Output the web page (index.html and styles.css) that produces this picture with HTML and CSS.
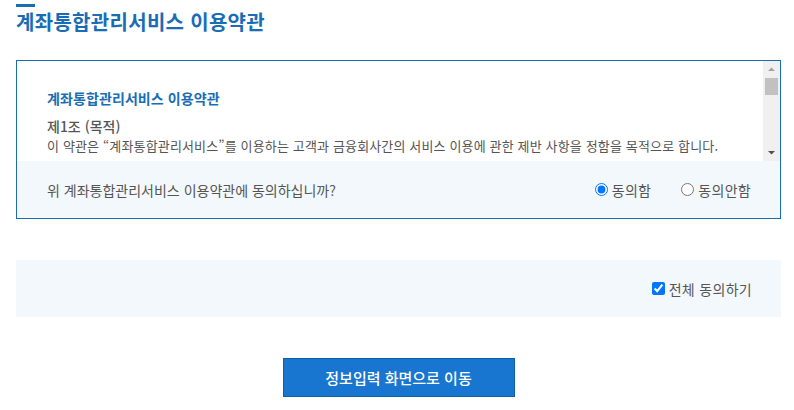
FILE: index.html
```html
<!DOCTYPE html>
<html lang="ko">
<head>
    <meta charset="UTF-8">
    <title>계좌통합관리서비스 이용약관</title>
    <link rel="stylesheet" href="styles.css">
</head>
<body>
    <div class="page">
        <!-- 페이지 제목 -->
        <h2 class="page-title">계좌통합관리서비스 이용약관</h2>

        <!-- 약관 박스 -->
        <div class="terms-box">
            <div class="terms-scroll">
                <div class="terms-text">
                    <h3 class="terms-title">계좌통합관리서비스 이용약관</h3>
                    <p class="terms-article">제1조 (목적)</p>
                    <p class="terms-body">이 약관은 “계좌통합관리서비스”를 이용하는 고객과 금융회사간의 서비스 이용에 관한 제반 사항을 정함을 목적으로 합니다.</p>
                </div>
                <!-- 스크롤바 -->
                <div class="scrollbar">
                    <svg class="arrow up" width="17" height="17" viewBox="0 0 17 17"><path d="M5 10 L12 10 L8.5 6.5 Z" fill="#a3a3a3"/></svg>
                    <div class="thumb"></div>
                    <div class="track"></div>
                    <svg class="arrow" width="17" height="17" viewBox="0 0 17 17"><path d="M5 7 L12 7 L8.5 10.5 Z" fill="#505050"/></svg>
                </div>
            </div>
            <div class="agree-row">
                <span class="question">위 계좌통합관리서비스 이용약관에 동의하십니까?</span>
                <div class="choices">
                    <label class="choice"><input type="radio" name="agree1" checked>동의함</label>
                    <label class="choice"><input type="radio" name="agree1">동의안함</label>
                </div>
            </div>
        </div>

        <!-- 전체 동의 -->
        <div class="all-agree">
            <label class="choice"><input type="checkbox" checked>전체 동의하기</label>
        </div>

        <div class="btn-area">
            <button class="btn-next" type="button">정보입력 화면으로 이동</button>
        </div>
    </div>
</body>
</html>
```
FILE: styles.css
```css
*{
    margin: 0;
    padding: 0;
    box-sizing: border-box;
}
body{
    font-family: "Noto Sans CJK KR", "Noto Sans", sans-serif;
    color: #555;
    background: #fff;
}
.page{
    padding: 4px 13px 0 16px;
}
/* 제목 */
.page-title{
    font-size: 20px;
    font-weight: 700;
    color: #1a6db5;
    line-height: 30px;
    letter-spacing: 0.3px;
}
.page-title::before{
    content: "";
    display: block;
    width: 19px;
    height: 3px;
    background: #1a6db5;
}
/* 약관 박스 */
.terms-box{
    margin-top: 23px;
    border: 1px solid #1a6db5;
}
.terms-scroll{
    display: flex;
    height: 100px;
    overflow: hidden;
}
.terms-text{
    flex: 1;
    padding: 28px 30px 0;
    font-size: 13px;
    line-height: 18px;
}
.terms-title{
    font-size: 14px;
    font-weight: 700;
    color: #1a6db5;
    margin-bottom: 9px;
    letter-spacing: 0.1px;
}
.terms-article{
    font-size: 14px;
    line-height: 21px;
    font-weight: 500;
    color: #555;
}
.terms-body{
    color: #555;
    letter-spacing: 0.15px;
}
.scrollbar{
    width: 17px;
    background: #f0f0f0;
    display: flex;
    flex-direction: column;
}
.scrollbar .arrow{
    display: block;
}
.thumb{
    height: 17px;
    margin: 0 2px;
    background: #c1c1c1;
}
.track{
    flex: 1;
}
.agree-row{
    display: flex;
    align-items: center;
    justify-content: space-between;
    height: 57px;
    background: #f2f8fb;
    padding: 0 29px 0 30px;
    font-size: 14px;
}
.choices{
    display: flex;
    gap: 30px;
}
.choice{
    display: flex;
    align-items: center;
    font-size: 14px;
    color: #555;
    letter-spacing: 0.3px;
}
.choice input{
    margin: 0 4px 0 0;
    width: 13px;
    height: 13px;
}
/* 전체 동의 */
.all-agree{
    margin-top: 41px;
    height: 57px;
    background: #f2f8fb;
    display: flex;
    align-items: center;
    justify-content: flex-end;
    padding-right: 29px;
}
/* 버튼 */
.btn-area{
    display: flex;
    justify-content: center;
    margin-top: 41px;
}
.btn-next{
    width: 232px;
    height: 39px;
    background: #1976d0;
    border: 1px solid #0f5ea8;
    color: #fff;
    font-family: inherit;
    font-size: 15px;
    font-weight: 500;
}
```
